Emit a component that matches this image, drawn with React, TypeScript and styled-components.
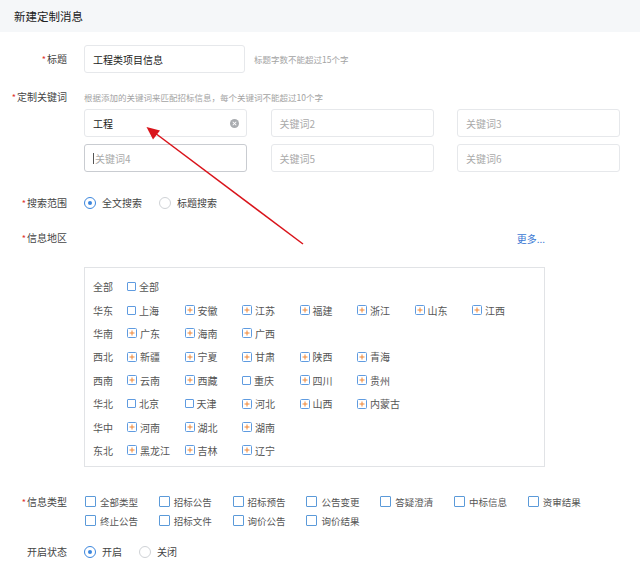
import React from 'react';
import styled, { createGlobalStyle } from 'styled-components';

const GlobalStyle = createGlobalStyle`
  html, body {
    margin: 0;
    padding: 0;
    background: #fff;
  }
  body {
    font-family: "Noto Sans CJK SC", "Noto Sans", sans-serif;
    color: #333;
  }
`;

const Page = styled.div`
  position: relative;
  width: 640px;
  height: 562px;
  overflow: hidden;
`;

const Header = styled.div`
  height: 32px;
  display: flex;
  align-items: center;
  padding-left: 14px;
  background: #f5f7f9;
  font-size: 11.5px;
  color: #222;
`;

const Form = styled.div`
  display: flex;
  flex-direction: column;
  padding-top: 13px;
`;

const FormRow = styled.div<{ $mt?: number; $align?: string }>`
  display: grid;
  grid-template-columns: 67px 1fr;
  column-gap: 17px;
  align-items: ${(p) => p.$align || 'center'};
  margin-top: ${(p) => p.$mt || 0}px;
`;

const Label = styled.div<{ $lh?: number }>`
  text-align: right;
  font-size: 10px;
  line-height: ${(p) => p.$lh || 14}px;
  color: #444;
  white-space: nowrap;
`;

const Star = styled.span`
  color: #e0322e;
  font-size: 9px;
  margin-right: 1px;
`;

const Inline = styled.div<{ $gap?: number }>`
  display: flex;
  align-items: center;
  gap: ${(p) => p.$gap || 0}px;
`;

const TextBox = styled.div<{ $focused?: boolean; $width?: number }>`
  box-sizing: border-box;
  width: ${(p) => (p.$width ? `${p.$width}px` : '100%')};
  height: 28px;
  border: 1px solid ${(p) => (p.$focused ? '#c9ccd1' : '#e6e8eb')};
  border-radius: 3px;
  display: flex;
  align-items: center;
  padding: 0 8px;
  font-size: 10px;
  background: #fff;
`;

const Value = styled.span`
  flex: 1;
  color: #222;
`;

const Placeholder = styled.span`
  flex: 1;
  color: #aaa;
  display: flex;
  align-items: center;
`;

const Caret = styled.span`
  display: inline-block;
  width: 1px;
  height: 11px;
  background: #555;
  margin-right: 1px;
`;

const ClearIcon = styled.span`
  width: 9px;
  height: 9px;
  border-radius: 50%;
  background: #a9acb0;
  position: relative;
  margin-right: -1px;
  &::before,
  &::after {
    content: '';
    position: absolute;
    left: 2px;
    top: 4px;
    width: 5px;
    height: 1px;
    background: #fff;
    transform: rotate(45deg);
  }
  &::after {
    transform: rotate(-45deg);
  }
`;

const Hint = styled.span`
  font-size: 8.5px;
  line-height: 14px;
  color: #a3a3a3;
  white-space: nowrap;
`;

const KeywordGrid = styled.div`
  display: grid;
  grid-template-columns: repeat(3, 163px);
  column-gap: 23.5px;
  row-gap: 7px;
  margin-top: 5px;
`;

const Column = styled.div`
  display: flex;
  flex-direction: column;
`;

const RadioGroup = styled.div<{ $gap: number }>`
  display: flex;
  align-items: center;
  gap: ${(p) => p.$gap}px;
  height: 16px;
`;

const RadioItem = styled.label`
  display: flex;
  align-items: center;
  gap: 6px;
  font-size: 10px;
  line-height: 14px;
  color: #444;
`;

const RadioCircle = styled.span<{ $checked?: boolean }>`
  box-sizing: border-box;
  width: 12px;
  height: 12px;
  border-radius: 50%;
  border: 1px solid ${(p) => (p.$checked ? '#3b86dd' : '#cfd2d6')};
  display: flex;
  align-items: center;
  justify-content: center;
  &::after {
    content: '';
    width: 4px;
    height: 4px;
    border-radius: 50%;
    background: ${(p) => (p.$checked ? '#3b86dd' : 'transparent')};
  }
`;

const MoreRow = styled.div`
  width: 461px;
  display: flex;
  justify-content: flex-end;
  height: 14px;
  align-items: center;
`;

const MoreLink = styled.a`
  font-size: 10px;
  color: #3a78d4;
  text-decoration: none;
`;

const RegionBox = styled.div`
  box-sizing: border-box;
  width: 461px;
  height: 200px;
  margin-top: 22px;
  border: 1px solid #e1e3e6;
  padding: 7px 0 0 8px;
`;

const RegionRow = styled.div`
  display: grid;
  grid-template-columns: 34px repeat(7, 57.5px);
  height: 23.4px;
  align-items: center;
`;

const RegionName = styled.span`
  font-size: 10px;
  color: #555;
`;

const RegionItem = styled.span`
  display: flex;
  align-items: center;
  gap: 2px;
  font-size: 10px;
  color: #555;
  white-space: nowrap;
`;

const SmallBox = styled.span`
  box-sizing: border-box;
  width: 9px;
  height: 9px;
  border: 1px solid #5f9be0;
  border-radius: 1px;
  margin-right: 1px;
`;

const TypeGrid = styled.div`
  display: grid;
  grid-template-columns: repeat(7, 73.8px);
  grid-auto-rows: 19px;
  align-items: center;
`;

const TypeItem = styled.span`
  display: flex;
  align-items: center;
  gap: 4px;
  font-size: 9.5px;
  color: #555;
  white-space: nowrap;
  padding-left: 1px;
`;

const TypeBox = styled.span`
  box-sizing: border-box;
  width: 11px;
  height: 11px;
  border: 1px solid #5b9ad9;
  border-radius: 1px;
`;

const ArrowLayer = styled.svg`
  position: absolute;
  left: 0;
  top: 0;
  pointer-events: none;
`;

const PlusBox = () => (
  <svg width="10" height="10" viewBox="0 0 10 10" style={{ marginRight: 1 }}>
    <rect x="0.5" y="0.5" width="9" height="9" rx="1" fill="#fff" stroke="#5f9be0" />
    <path d="M2.5 5h5M5 2.5v5" stroke="#ee8636" strokeWidth="1" />
  </svg>
);

type Region = { name: string; plus: boolean };

const p = (name: string): Region => ({ name, plus: true });
const c = (name: string): Region => ({ name, plus: false });

const regions: [string, Region[]][] = [
  ['全部', [c('全部')]],
  ['华东', [c('上海'), p('安徽'), p('江苏'), p('福建'), p('浙江'), p('山东'), p('江西')]],
  ['华南', [p('广东'), p('海南'), p('广西')]],
  ['西北', [p('新疆'), p('宁夏'), p('甘肃'), p('陕西'), p('青海')]],
  ['西南', [p('云南'), p('西藏'), c('重庆'), p('四川'), p('贵州')]],
  ['华北', [c('北京'), c('天津'), p('河北'), p('山西'), p('内蒙古')]],
  ['华中', [p('河南'), p('湖北'), p('湖南')]],
  ['东北', [p('黑龙江'), p('吉林'), p('辽宁')]],
];

const infoTypes = [
  '全部类型', '招标公告', '招标预告', '公告变更', '答疑澄清', '中标信息', '资审结果',
  '终止公告', '招标文件', '询价公告', '询价结果',
];

const Required = ({ children, lh }: { children: React.ReactNode; lh?: number }) => (
  <Label $lh={lh}>
    <Star>*</Star>
    {children}
  </Label>
);

export default function App() {
  return (
    <Page>
      <GlobalStyle />
      <Header>新建定制消息</Header>
      <Form>
        <FormRow>
          <Required>标题</Required>
          <Inline $gap={9}>
            <TextBox $width={161}>
              <Value>工程类项目信息</Value>
            </TextBox>
            <Hint>标题字数不能超过15个字</Hint>
          </Inline>
        </FormRow>

        <FormRow $mt={17} $align="start">
          <Required>定制关键词</Required>
          <Column>
            <Hint>根据添加的关键词来匹配招标信息，每个关键词不能超过10个字</Hint>
            <KeywordGrid>
              <TextBox>
                <Value>工程</Value>
                <ClearIcon />
              </TextBox>
              <TextBox>
                <Placeholder>关键词2</Placeholder>
              </TextBox>
              <TextBox>
                <Placeholder>关键词3</Placeholder>
              </TextBox>
              <TextBox $focused>
                <Placeholder>
                  <Caret />
                  关键词4
                </Placeholder>
              </TextBox>
              <TextBox>
                <Placeholder>关键词5</Placeholder>
              </TextBox>
              <TextBox>
                <Placeholder>关键词6</Placeholder>
              </TextBox>
            </KeywordGrid>
          </Column>
        </FormRow>

        <FormRow $mt={23}>
          <Required>搜索范围</Required>
          <RadioGroup $gap={17}>
            <RadioItem>
              <RadioCircle $checked />
              全文搜索
            </RadioItem>
            <RadioItem>
              <RadioCircle />
              标题搜索
            </RadioItem>
          </RadioGroup>
        </FormRow>

        <FormRow $mt={20} $align="start">
          <Required>信息地区</Required>
          <Column>
            <MoreRow>
              <MoreLink>更多...</MoreLink>
            </MoreRow>
            <RegionBox>
              {regions.map(([area, items]) => (
                <RegionRow key={area}>
                  <RegionName>{area}</RegionName>
                  {items.map((r) => (
                    <RegionItem key={r.name}>
                      {r.plus ? <PlusBox /> : <SmallBox />}
                      {r.name}
                    </RegionItem>
                  ))}
                </RegionRow>
              ))}
            </RegionBox>
          </Column>
        </FormRow>

        <FormRow $mt={25} $align="start">
          <Required lh={19}>信息类型</Required>
          <TypeGrid>
            {infoTypes.map((t) => (
              <TypeItem key={t}>
                <TypeBox />
                {t}
              </TypeItem>
            ))}
          </TypeGrid>
        </FormRow>

        <FormRow $mt={14}>
          <Label>开启状态</Label>
          <RadioGroup $gap={17}>
            <RadioItem>
              <RadioCircle $checked />
              开启
            </RadioItem>
            <RadioItem>
              <RadioCircle />
              关闭
            </RadioItem>
          </RadioGroup>
        </FormRow>
      </Form>

      <ArrowLayer width="640" height="562" viewBox="0 0 640 562">
        <line x1="303" y1="244" x2="155" y2="133" stroke="#d9141b" strokeWidth="1.5" />
        <polygon points="146.5,127 160,130.5 153,139.5" fill="#d9141b" />
      </ArrowLayer>
    </Page>
  );
}
